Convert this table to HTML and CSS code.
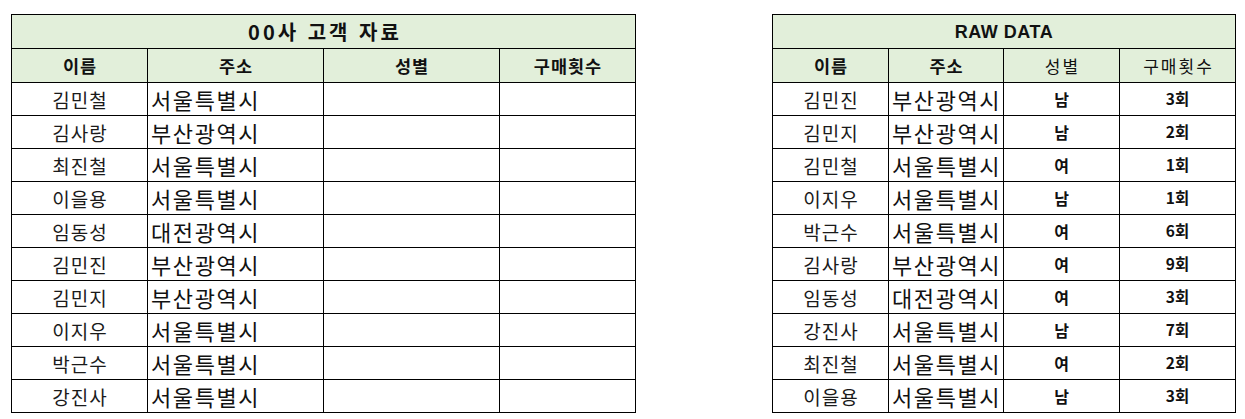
FILE: index.html
```html
<!DOCTYPE html>
<html lang="ko">
<head>
<meta charset="utf-8">
<link rel="stylesheet" href="styles.css">
</head>
<body>
<div class="page">
  <table class="sheet left">
    <colgroup><col class="c1"><col class="c2"><col class="c3"><col class="c4"></colgroup>
    <tr class="title"><td colspan="4">00사 고객 자료</td></tr>
    <tr class="head"><td>이름</td><td>주소</td><td>성별</td><td>구매횟수</td></tr>
    <tr><td class="name">김민철</td><td class="addr">서울특별시</td><td></td><td></td></tr>
    <tr><td class="name">김사랑</td><td class="addr">부산광역시</td><td></td><td></td></tr>
    <tr><td class="name">최진철</td><td class="addr">서울특별시</td><td></td><td></td></tr>
    <tr><td class="name">이을용</td><td class="addr">서울특별시</td><td></td><td></td></tr>
    <tr><td class="name">임동성</td><td class="addr">대전광역시</td><td></td><td></td></tr>
    <tr><td class="name">김민진</td><td class="addr">부산광역시</td><td></td><td></td></tr>
    <tr><td class="name">김민지</td><td class="addr">부산광역시</td><td></td><td></td></tr>
    <tr><td class="name">이지우</td><td class="addr">서울특별시</td><td></td><td></td></tr>
    <tr><td class="name">박근수</td><td class="addr">서울특별시</td><td></td><td></td></tr>
    <tr><td class="name">강진사</td><td class="addr">서울특별시</td><td></td><td></td></tr>
  </table>
  <table class="sheet right">
    <colgroup><col class="r1"><col class="r2"><col class="r3"><col class="r4"></colgroup>
    <tr class="title"><td colspan="4" class="latin">RAW DATA</td></tr>
    <tr class="head"><td>이름</td><td>주소</td><td class="light">성별</td><td class="light">구매횟수</td></tr>
    <tr><td class="name">김민진</td><td class="addr">부산광역시</td><td class="sex">남</td><td class="cnt">3회</td></tr>
    <tr><td class="name">김민지</td><td class="addr">부산광역시</td><td class="sex">남</td><td class="cnt">2회</td></tr>
    <tr><td class="name">김민철</td><td class="addr">서울특별시</td><td class="sex">여</td><td class="cnt">1회</td></tr>
    <tr><td class="name">이지우</td><td class="addr">서울특별시</td><td class="sex">남</td><td class="cnt">1회</td></tr>
    <tr><td class="name">박근수</td><td class="addr">서울특별시</td><td class="sex">여</td><td class="cnt">6회</td></tr>
    <tr><td class="name">김사랑</td><td class="addr">부산광역시</td><td class="sex">여</td><td class="cnt">9회</td></tr>
    <tr><td class="name">임동성</td><td class="addr">대전광역시</td><td class="sex">여</td><td class="cnt">3회</td></tr>
    <tr><td class="name">강진사</td><td class="addr">서울특별시</td><td class="sex">남</td><td class="cnt">7회</td></tr>
    <tr><td class="name">최진철</td><td class="addr">서울특별시</td><td class="sex">여</td><td class="cnt">2회</td></tr>
    <tr><td class="name">이을용</td><td class="addr">서울특별시</td><td class="sex">남</td><td class="cnt">3회</td></tr>
  </table>
</div>
</body>
</html>
```
FILE: styles.css
```css
html, body {
  margin: 0;
  padding: 0;
  background: #ffffff;
}
body {
  font-family: "Noto Sans CJK KR", "Noto Sans", sans-serif;
  color: #111;
}
.page {
  display: flex;
  align-items: flex-start;
  gap: 136px;
  padding: 14px 0 0 11px;
}
.sheet {
  border-collapse: collapse;
  table-layout: fixed;
}
.sheet.left { width: 625px; }
.sheet.right { width: 464px; }
.c1 { width: 136px; }
.c2 { width: 176px; }
.c3 { width: 176px; }
.c4 { width: 136px; }
.r1 { width: 116px; }
.r2 { width: 115px; }
.r3 { width: 116px; }
.r4 { width: 116px; }
.sheet td {
  border: 1px solid #000;
  padding: 0;
  height: 32px;
  text-align: center;
  vertical-align: middle;
  line-height: 1;
  white-space: nowrap;
  overflow: hidden;
}
.sheet tr.title td {
  background: #e2efda;
  height: 33px;
  font-weight: 700;
  font-size: 20px;
  letter-spacing: 3px;
  padding-left: 3px;
}
.sheet tr.title td.latin {
  font-family: "Liberation Sans", "Noto Sans CJK KR", sans-serif;
  font-size: 18px;
  letter-spacing: 0.5px;
  padding-left: 0;
}
.sheet tr.head td {
  background: #e2efda;
  height: 33px;
  font-weight: 700;
  font-size: 17.5px;
  letter-spacing: 1px;
  padding-left: 1px;
}
.sheet tr.head td.light {
  font-weight: 400;
  font-size: 17px;
  letter-spacing: 2px;
  padding-left: 2px;
}
.sheet td.name {
  font-size: 19px;
  letter-spacing: 1px;
  padding-left: 1px;
  color: #1a1a1a;
}
.sheet td.addr {
  text-align: left;
  padding-left: 3px;
  font-size: 22px;
  letter-spacing: 1.6px;
  color: #111;
}
.sheet td.sex {
  font-weight: 700;
  font-size: 16px;
}
.sheet td.cnt {
  font-weight: 700;
  font-size: 15.5px;
}
```
